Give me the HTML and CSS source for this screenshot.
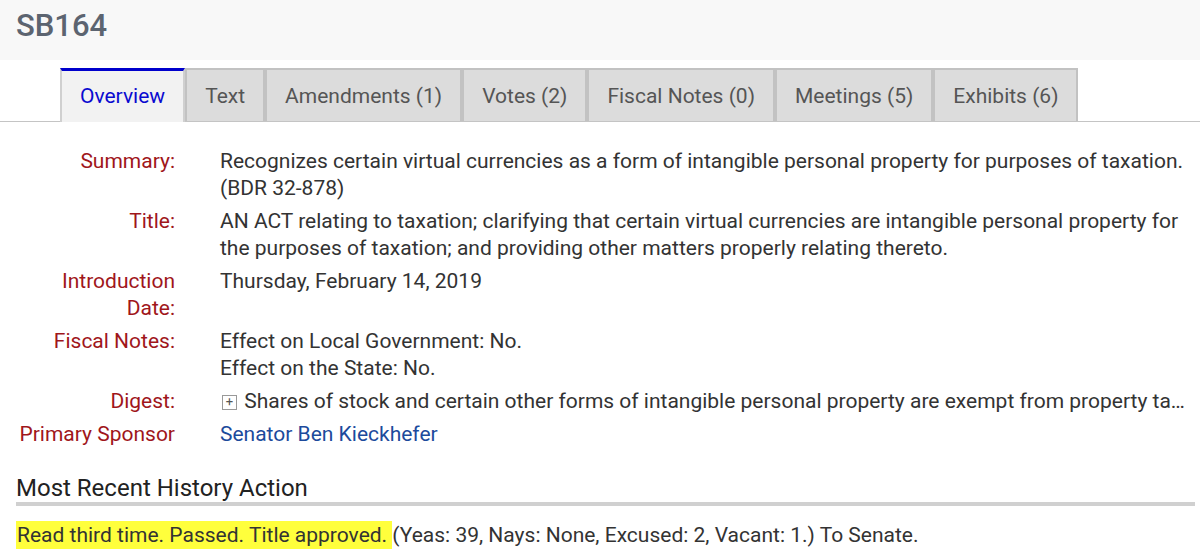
FILE: index.html
```html
<!DOCTYPE html>
<html lang="en">
  <head>
    <meta charset="UTF-8" />
    <title>SB164</title>
    <link rel="stylesheet" href="styles.css">
  </head>
  <body>
    <div class="bill-header">
      <h1>SB164</h1>
    </div>

    <ul class="tabs">
      <li class="tab active">Overview</li>
      <li class="tab">Text</li>
      <li class="tab">Amendments (1)</li>
      <li class="tab">Votes (2)</li>
      <li class="tab">Fiscal Notes (0)</li>
      <li class="tab">Meetings (5)</li>
      <li class="tab">Exhibits (6)</li>
    </ul>

    <div class="overview">
      <div class="label">Summary:</div>
      <div class="value">Recognizes certain virtual currencies as a form of intangible personal property for purposes of taxation. (BDR 32-878)</div>

      <div class="label">Title:</div>
      <div class="value">AN ACT relating to taxation; clarifying that certain virtual currencies are intangible personal property for the purposes of taxation; and providing other matters properly relating thereto.</div>

      <div class="label">Introduction Date:</div>
      <div class="value">Thursday, February 14, 2019</div>

      <div class="label">Fiscal Notes:</div>
      <div class="value">
        Effect on Local Government: No.<br />
        Effect on the State: No.
      </div>

      <div class="label">Digest:</div>
      <div class="value digest"><span class="expand">+</span> Shares of stock and certain other forms of intangible personal property are exempt from property taxation.</div>

      <div class="label">Primary Sponsor</div>
      <div class="value"><a href="#">Senator Ben Kieckhefer</a></div>
    </div>

    <h2 class="section-title">Most Recent History Action</h2>
    <p class="history">
      <span class="highlight">Read third time. Passed. Title approved. </span>(Yeas: 39, Nays: None, Excused: 2, Vacant: 1.) To Senate.
    </p>
  </body>
</html>
```

FILE: styles.css
```css
body {
  margin: 0;
  font-family: Roboto, "Liberation Sans", sans-serif;
  color: #333;
  background: #fff;
}

.bill-header {
  background: #f8f8f8;
  height: 60px;
  padding-left: 16px;
}

.bill-header h1 {
  margin: 0;
  font-size: 31px;
  font-weight: 500;
  line-height: 52px;
  color: #5c6470;
}

.tabs {
  display: flex;
  list-style: none;
  margin: 8px 0 0 0;
  padding: 0 0 0 60px;
  border-bottom: 1px solid #c4c4c4;
}

.tab {
  height: 51px;
  line-height: 53px;
  padding: 0 18px;
  font-size: 21px;
  color: #555;
  background: #dcdcdc;
  border: 2px solid #c2c2c2;
  border-bottom: none;
}

.tab.active {
  background: #f2f2f2;
  color: #0a0ad0;
  border-top: 3px solid #0000cc;
  border-left-color: #d0d0d0;
  border-right-color: #d0d0d0;
  height: 51px;
  line-height: 51px;
  margin-bottom: -1px;
}

.overview {
  display: grid;
  grid-template-columns: 160px 1fr;
  column-gap: 45px;
  row-gap: 6px;
  margin: 26px 8px 0 15px;
  font-size: 21px;
  line-height: 27px;
}

.label {
  color: #a0161b;
  text-align: right;
}

.value {
  color: #333;
  min-width: 0;
}

.digest {
  white-space: nowrap;
  overflow: hidden;
  text-overflow: ellipsis;
}

.expand {
  display: inline-block;
  width: 13px;
  height: 13px;
  line-height: 12px;
  border: 1px solid #999;
  font-size: 13px;
  text-align: center;
  color: #555;
  vertical-align: 2px;
  margin: 0 2px 0 2px;
}

.value a {
  color: #1c4a9c;
  text-decoration: none;
}

.section-title {
  margin: 26px 5px 0 16px;
  padding-bottom: 0;
  font-size: 24px;
  font-weight: 400;
  line-height: 28px;
  color: #222;
  border-bottom: 4px solid #d0d0d0;
}

.history {
  margin: 16px 0 0 16px;
  font-size: 21px;
  line-height: 27px;
  color: #333;
}

.highlight {
  background: #ffff3c;
  padding: 2px 0 2px 1px;
}
```
